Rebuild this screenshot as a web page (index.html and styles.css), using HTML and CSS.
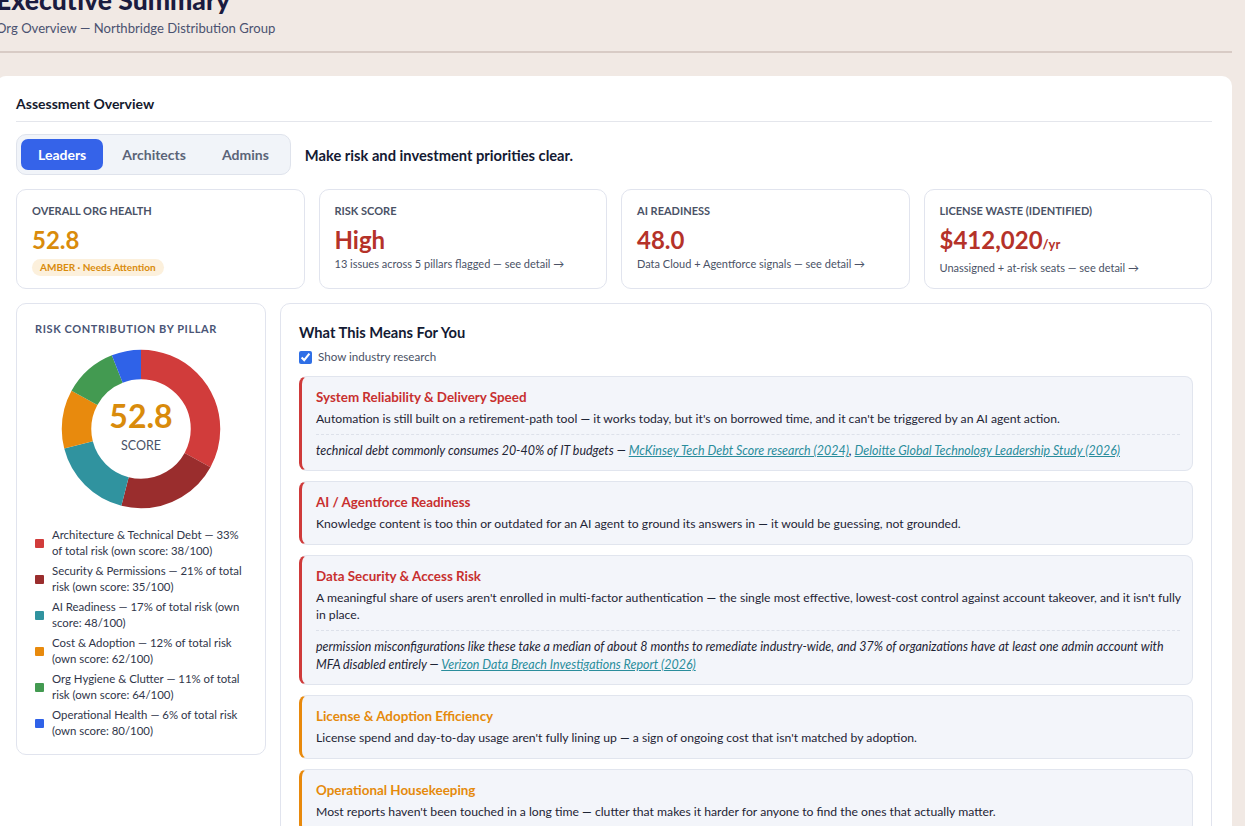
FILE: index.html
```html
<!DOCTYPE html>
<html lang="en">
<head>
<meta charset="utf-8">
<title>Executive Summary</title>
<link rel="stylesheet" href="styles.css">
</head>
<body>
<div class="page">
  <header class="page-header">
    <h1 class="title">Executive Summary</h1>
    <div class="subtitle">Org Overview — Northbridge Distribution Group</div>
  </header>

  <section class="panel">
    <h2 class="panel-title">Assessment Overview</h2>

    <div class="toolbar">
      <div class="tabs">
        <button class="tab active">Leaders</button>
        <button class="tab">Architects</button>
        <button class="tab">Admins</button>
      </div>
      <div class="tagline">Make risk and investment priorities clear.</div>
    </div>

    <div class="kpis">
      <div class="kpi">
        <div class="kpi-label">Overall Org Health</div>
        <div class="kpi-value amber">52.8</div>
        <span class="badge">AMBER · Needs Attention</span>
      </div>
      <div class="kpi">
        <div class="kpi-label">Risk Score</div>
        <div class="kpi-value red">High</div>
        <div class="kpi-sub">13 issues across 5 pillars flagged — see detail →</div>
      </div>
      <div class="kpi">
        <div class="kpi-label">AI Readiness</div>
        <div class="kpi-value red">48.0</div>
        <div class="kpi-sub">Data Cloud + Agentforce signals — see detail →</div>
      </div>
      <div class="kpi">
        <div class="kpi-label">License Waste (Identified)</div>
        <div class="kpi-value red">$412,020<span class="unit">/yr</span></div>
        <div class="kpi-sub">Unassigned + at-risk seats — see detail →</div>
      </div>
    </div>

    <div class="lower">
      <aside class="card pillar-card">
        <div class="card-label">Risk Contribution by Pillar</div>
        <div class="donut">
          <svg viewBox="0 0 160 160" width="160" height="160" class="donut-svg">
            <g transform="rotate(-90 80 80)" fill="none" stroke-width="29.5">
              <circle cx="80" cy="80" r="64.5" pathLength="100" stroke="#d13c3b" stroke-dasharray="33 67" stroke-dashoffset="0"/>
              <circle cx="80" cy="80" r="64.5" pathLength="100" stroke="#9a2d2d" stroke-dasharray="21 79" stroke-dashoffset="-33"/>
              <circle cx="80" cy="80" r="64.5" pathLength="100" stroke="#30939f" stroke-dasharray="17 83" stroke-dashoffset="-54"/>
              <circle cx="80" cy="80" r="64.5" pathLength="100" stroke="#e88a0d" stroke-dasharray="12 88" stroke-dashoffset="-71"/>
              <circle cx="80" cy="80" r="64.5" pathLength="100" stroke="#439a51" stroke-dasharray="11 89" stroke-dashoffset="-83"/>
              <circle cx="80" cy="80" r="64.5" pathLength="100" stroke="#2f62e8" stroke-dasharray="6 94" stroke-dashoffset="-94"/>
            </g>
          </svg>
          <div class="donut-center">
            <div class="donut-value">52.8</div>
            <div class="donut-caption">SCORE</div>
          </div>
        </div>
        <ul class="legend">
          <li><span class="sw" style="background:#d13c3b"></span><span>Architecture &amp; Technical Debt — 33% of total risk (own score: 38/100)</span></li>
          <li><span class="sw" style="background:#9a2d2d"></span><span>Security &amp; Permissions — 21% of total risk (own score: 35/100)</span></li>
          <li><span class="sw" style="background:#30939f"></span><span>AI Readiness — 17% of total risk (own score: 48/100)</span></li>
          <li><span class="sw" style="background:#e88a0d"></span><span>Cost &amp; Adoption — 12% of total risk (own score: 62/100)</span></li>
          <li><span class="sw" style="background:#439a51"></span><span>Org Hygiene &amp; Clutter — 11% of total risk (own score: 64/100)</span></li>
          <li><span class="sw" style="background:#2f62e8"></span><span>Operational Health — 6% of total risk (own score: 80/100)</span></li>
        </ul>
      </aside>

      <section class="card insights">
        <h3 class="insights-title">What This Means For You</h3>
        <label class="check"><input type="checkbox" checked> Show industry research</label>

        <article class="insight red-edge">
          <h4 class="insight-title">System Reliability &amp; Delivery Speed</h4>
          <p class="insight-body">Automation is still built on a retirement-path tool — it works today, but it's on borrowed time, and it can't be triggered by an AI agent action.</p>
          <p class="research">technical debt commonly consumes 20-40% of IT budgets — <a href="#">McKinsey Tech Debt Score research (2024)</a>, <a href="#">Deloitte Global Technology Leadership Study (2026)</a></p>
        </article>

        <article class="insight red-edge">
          <h4 class="insight-title">AI / Agentforce Readiness</h4>
          <p class="insight-body">Knowledge content is too thin or outdated for an AI agent to ground its answers in — it would be guessing, not grounded.</p>
        </article>

        <article class="insight red-edge">
          <h4 class="insight-title">Data Security &amp; Access Risk</h4>
          <p class="insight-body">A meaningful share of users aren't enrolled in multi-factor authentication — the single most effective, lowest-cost control against account takeover, and it isn't fully in place.</p>
          <p class="research">permission misconfigurations like these take a median of about 8 months to remediate industry-wide, and 37% of organizations have at least one admin account with MFA disabled entirely — <a href="#">Verizon Data Breach Investigations Report (2026)</a></p>
        </article>

        <article class="insight amber-edge">
          <h4 class="insight-title">License &amp; Adoption Efficiency</h4>
          <p class="insight-body">License spend and day-to-day usage aren't fully lining up — a sign of ongoing cost that isn't matched by adoption.</p>
        </article>

        <article class="insight amber-edge">
          <h4 class="insight-title">Operational Housekeeping</h4>
          <p class="insight-body">Most reports haven't been touched in a long time — clutter that makes it harder for anyone to find the ones that actually matter.</p>
        </article>
      </section>
    </div>
  </section>
</div>
</body>
</html>
```

FILE: styles.css
```css
* { box-sizing: border-box; }

html, body {
  margin: 0;
  padding: 0;
  background: #f1e9e4;
  overflow: hidden;
}

body {
  font-family: Lato, "Noto Sans", "Liberation Sans", sans-serif;
  color: #1f2433;
}

.page {
  width: 1236px;
  margin-left: -4px;
  margin-top: -17px;
}

.page-header {
  border-bottom: 2px solid #d8cbc5;
  padding-bottom: 14px;
  margin-bottom: 23px;
}

.title {
  margin: 0;
  font-size: 26.5px;
  line-height: 34px;
  font-weight: 900;
  color: #1b1b3f;
}

.subtitle {
  font-size: 13.1px;
  line-height: 18px;
  color: #4b5270;
  margin-top: 2px;
}

.panel {
  background: #ffffff;
  border-radius: 10px;
  padding: 18px 20px 20px 20px;
}

.panel-title {
  margin: 0;
  font-size: 14px;
  line-height: 20px;
  font-weight: 700;
  color: #151a2e;
  padding-bottom: 7px;
  border-bottom: 1px solid #e4e6ec;
}

.toolbar {
  display: flex;
  align-items: center;
  gap: 14px;
  margin-top: 12px;
}

.tabs {
  display: flex;
  align-items: center;
  gap: 2px;
  padding: 4px;
  background: #f1f4f9;
  border: 1px solid #dfe3ec;
  border-radius: 10px;
}

.tab {
  font-family: inherit;
  font-size: 14px;
  font-weight: 700;
  color: #5b6478;
  background: transparent;
  border: none;
  border-radius: 7px;
  padding: 0 17px;
  height: 31px;
  cursor: pointer;
}

.tab.active {
  background: #3563e9;
  color: #ffffff;
  padding: 0 17px;
}

.tagline {
  font-size: 14.7px;
  font-weight: 700;
  color: #141a33;
}

.kpis {
  display: grid;
  grid-template-columns: repeat(4, 1fr);
  gap: 14px;
  margin-top: 14px;
}

.kpi {
  border: 1px solid #e1e4ee;
  border-radius: 10px;
  padding: 13px 15px 12px 15px;
  height: 100px;
}

.kpi-label {
  font-size: 11px;
  line-height: 16px;
  font-weight: 700;
  text-transform: uppercase;
  color: #4a5266;
}

.kpi-value {
  font-size: 24px;
  line-height: 30px;
  font-weight: 700;
  margin-top: 6px;
}

.kpi-value .unit {
  font-size: 13px;
  font-weight: 700;
}

.amber { color: #d98b0b; }
.red { color: #b53229; }

.kpi-sub {
  font-size: 11px;
  line-height: 16px;
  color: #4a5266;
  margin-top: 1px;
}

.badge {
  display: inline-block;
  margin-top: 3px;
  background: #fcf0dc;
  color: #d98b0b;
  font-size: 10px;
  font-weight: 700;
  line-height: 17px;
  padding: 0 8px;
  border-radius: 9px;
}

.lower {
  display: flex;
  align-items: flex-start;
  gap: 14px;
  margin-top: 14px;
}

.card {
  border: 1px solid #e1e4ee;
  border-radius: 10px;
  background: #ffffff;
}

.pillar-card {
  width: 250px;
  flex: none;
  padding: 17px 18px 15px 18px;
}

.card-label {
  font-size: 11px;
  line-height: 16px;
  font-weight: 700;
  letter-spacing: 0.6px;
  text-transform: uppercase;
  color: #4a5576;
}

.donut {
  position: relative;
  width: 160px;
  height: 160px;
  margin: 12px auto 0 auto;
}

.donut-svg { display: block; }

.donut-center {
  position: absolute;
  inset: 0;
  display: flex;
  flex-direction: column;
  align-items: center;
  justify-content: center;
}

.donut-value {
  font-size: 32px;
  line-height: 36px;
  font-weight: 700;
  color: #d98b0b;
  margin-top: -6px;
}

.donut-caption {
  font-size: 12.5px;
  line-height: 16px;
  color: #4a5266;
  margin-top: 4px;
}

.legend {
  list-style: none;
  margin: 18px 0 0 0;
  padding: 0;
  display: flex;
  flex-direction: column;
  gap: 4px;
}

.legend li {
  display: flex;
  align-items: center;
  gap: 8px;
  font-size: 11.4px;
  line-height: 16px;
  color: #30364a;
}

.sw {
  flex: none;
  width: 9px;
  height: 9px;
  border-radius: 1px;
}

.insights {
  flex: 1;
  padding: 18px 18px 18px 18px;
}

.insights-title {
  margin: 0;
  font-size: 14.7px;
  line-height: 20px;
  font-weight: 700;
  color: #131a33;
}

.check {
  display: flex;
  align-items: center;
  gap: 6px;
  font-size: 11.6px;
  line-height: 18px;
  color: #4a5266;
  margin-top: 6px;
}

.check input {
  margin: 0;
  width: 13px;
  height: 13px;
  accent-color: #2f6fe6;
}

.insight {
  margin-top: 10px;
  background: #f3f5fa;
  border: 1px solid #e1e5ee;
  border-radius: 8px;
  padding: 11px 3px 12px 14px;
}

.check + .insight { margin-top: 10px; }

.red-edge { border-left: 3px solid #cf3a3a; }
.amber-edge { border-left: 3px solid #e8890c; }

.insight-title {
  margin: 0;
  font-size: 13.4px;
  line-height: 18px;
  font-weight: 700;
}

.red-edge .insight-title { color: #c8302f; }
.amber-edge .insight-title { color: #e58a0c; }

.insight-body {
  margin: 4px 0 0 0;
  font-size: 12.2px;
  line-height: 17px;
  color: #1e2435;
}

.research {
  margin: 7px 9px -2px 0;
  padding-top: 7px;
  border-top: 1px dashed #dde1ea;
  font-size: 12.45px;
  line-height: 18px;
  font-style: italic;
  color: #1e2435;
}

.research a {
  color: #2a8d9c;
  text-decoration: underline;
}
```
